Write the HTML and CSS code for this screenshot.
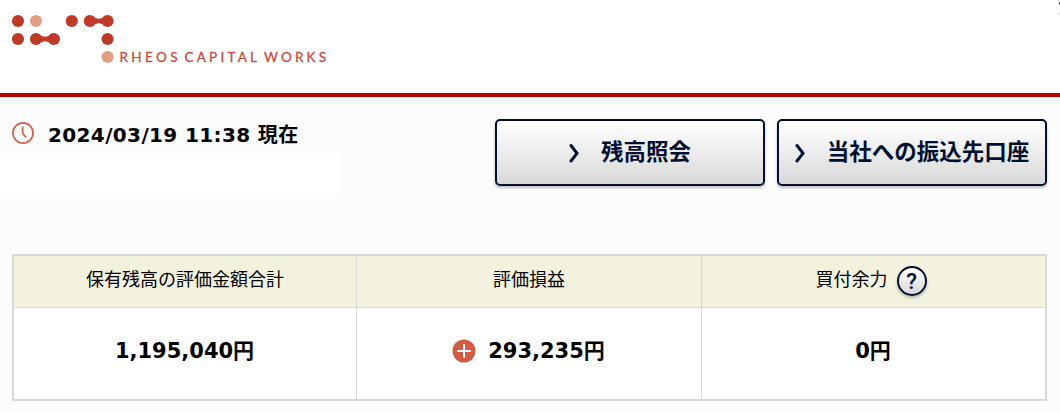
FILE: index.html
```
<!DOCTYPE html>
<html lang="ja">
<head>
  <meta charset="UTF-8">
  <meta name="viewport" content="width=device-width, initial-scale=1.0">
  <title>RHEOS CAPITAL WORKS</title>
  <link rel="stylesheet" href="styles.css">
</head>
<body>
  <header class="header">
    <svg class="logo" width="340" height="70" viewBox="0 0 340 70">
      <g fill="#bf3a27">
        <circle cx="18" cy="21" r="6.1"/>
        <circle cx="71.8" cy="21" r="6.1"/>
        <circle cx="89.8" cy="21" r="6.1"/>
        <circle cx="107.6" cy="21" r="6.1"/>
        <path d="M92 15.400Q98.700 22 105.400 15.400V26.600Q98.700 20 92 26.600Z"/>
        <circle cx="18" cy="39" r="6.1"/>
        <circle cx="36" cy="39" r="6.1"/>
        <circle cx="53.900" cy="39" r="6.1"/>
        <path d="M38.200 33.400Q45 40 51.700 33.400V44.600Q45 38 38.200 44.600Z"/>
        <circle cx="107.6" cy="39" r="6.1"/>
      </g>
      <g fill="#dea080">
        <circle cx="36" cy="21" r="6.1"/>
        <circle cx="107.6" cy="57" r="6.1"/>
      </g>
      <g class="logo-text">
        <text x="119.500" y="61.800" textLength="58">RHEOS</text>
        <text x="184.500" y="61.800" textLength="72.500">CAPITAL</text>
        <text x="264" y="61.800" textLength="62">WORKS</text>
      </g>
    </svg>
  </header>

  <main class="content">
    <div class="top">
      <div class="status">
        <p class="date">
          <svg class="clock" width="22" height="22" viewBox="0 0 22 22">
            <circle cx="11" cy="11" r="10.1"/>
            <path d="M10.700 4.500V11.500L14.200 15.500"/>
          </svg>
          <span>2024/03/19 11:38 現在</span>
        </p>
        <div class="account-name"></div>
      </div>
      <div class="buttons">
        <button class="btn">
          <svg class="arrow" width="12" height="20" viewBox="0 0 12 20"><path d="M3 2.500L9 10.300L3 18"/></svg>
          <span>残高照会</span>
        </button>
        <button class="btn">
          <svg class="arrow" width="12" height="20" viewBox="0 0 12 20"><path d="M3 2.500L9 10.300L3 18"/></svg>
          <span>当社への振込先口座</span>
        </button>
      </div>
    </div>

    <table class="balance">
      <colgroup>
        <col class="col-total">
        <col class="col-profit">
        <col>
      </colgroup>
      <thead>
        <tr>
          <th>保有残高の評価金額合計</th>
          <th>評価損益</th>
          <th><div class="cell"><span class="label">買付余力</span><span class="help">?</span></div></th>
        </tr>
      </thead>
      <tbody>
        <tr>
          <td>1,195,040円</td>
          <td>
            <div class="cell">
              <svg class="plus" width="24" height="24" viewBox="0 0 24 24">
                <circle cx="12" cy="12" r="11.500"/>
                <path d="M12 6V18M6 12H18"/>
              </svg>
              <span>293,235円</span>
            </div>
          </td>
          <td>0円</td>
        </tr>
      </tbody>
    </table>
  </main>
</body>
</html>
```
FILE: styles.css
```
* { box-sizing: border-box; margin: 0; padding: 0; }
body {
  height: 413px;
  overflow: hidden;
  background-color: #fff;
  color: #000;
  font-family: "DejaVu Sans", "Noto Sans CJK JP", sans-serif;
}
.header {
  position: relative;
  height: 97px;
  border-bottom: 4px solid #b00000;
}
/* 右端のはみ出し */
.header::after {
  content: "";
  position: absolute;
  top: 2px;
  right: 0;
  width: 1px;
  height: 12px;
  background: linear-gradient(#333 0 2px, #aaa 2px 3px, transparent 3px 11px, #aaa 11px);
}
.logo { display: block; }
.logo-text {
  font-family: Lato, sans-serif;
  font-size: 13.5px;
  fill: #c64c3b;
  stroke: #c64c3b;
  stroke-width: 0.3px;
}

.content {
  height: 313px;
  padding: 22px 13px 0 12px;
  background-color: #fcfcfc;
}
.top {
  display: flex;
  justify-content: space-between;
  height: 135px;
}
.date {
  display: flex;
  align-items: center;
  gap: 14px;
  height: 28px;
  font-size: 20px;
  font-weight: bold;
  letter-spacing: 0.37px;
}
.clock { fill: none; stroke: #d5604a; stroke-width: 1.7; }
.account-name {
  width: 339px;
  height: 41px;
  margin: 6px 0 0 -12px;
  background-color: #fff;
}

.buttons { display: flex; gap: 12px; }
.btn {
  display: flex;
  align-items: center;
  justify-content: center;
  gap: 21px;
  width: 270px;
  height: 67px;
  padding-right: 1px;
  border: 2px solid #001033;
  border-radius: 5px;
  background: linear-gradient(#fff, #d9d9d9);
  box-shadow: 0 2px 3px rgba(0, 0, 0, 0.25);
  color: #001033;
  font-family: "Noto Sans CJK JP", sans-serif;
  font-size: 22.5px;
  font-weight: bold;
  white-space: nowrap;
}
.btn span { padding-bottom: 5px; }
.arrow { flex: none; fill: none; stroke: #001033; stroke-width: 3; stroke-linecap: round; }

.balance {
  width: 1035px;
  height: 147px;
  border: 2px solid #d9d9d9;
  border-spacing: 0;
  table-layout: fixed;
  background-color: #fff;
  text-align: center;
}
.col-total { width: 342px; }
.col-profit { width: 345px; }
.balance th {
  height: 52px;
  padding-bottom: 7px;
  border-bottom: 1px solid #d9d9d9;
  background-color: #f3f2df;
  font-size: 18px;
  font-weight: normal;
}
.balance td {
  height: 91px;
  padding: 0 1px 9px 0;
  font-size: 21px;
  font-weight: bold;
}
.balance th + th,
.balance td + td { border-left: 1px solid #d9d9d9; }
.balance th:last-child { padding: 0 5px 2px 0; }
.cell {
  display: flex;
  align-items: center;
  justify-content: center;
  gap: 12px;
}
.label { padding-bottom: 5px; }
.plus { margin-top: 3px; fill: #d15b43; }
.plus path { stroke: #fff; stroke-width: 2; stroke-linecap: round; }
.help {
  width: 30px;
  height: 30px;
  margin-left: -3px;
  border: 2px solid #001033;
  border-radius: 50%;
  background: linear-gradient(#fff, #d9d9d9);
  box-shadow: 0 2px 3px rgba(0, 0, 0, 0.25);
  color: #001033;
  font-family: Roboto, sans-serif;
  font-size: 22px;
  font-weight: 500;
  line-height: 27px;
}
```
